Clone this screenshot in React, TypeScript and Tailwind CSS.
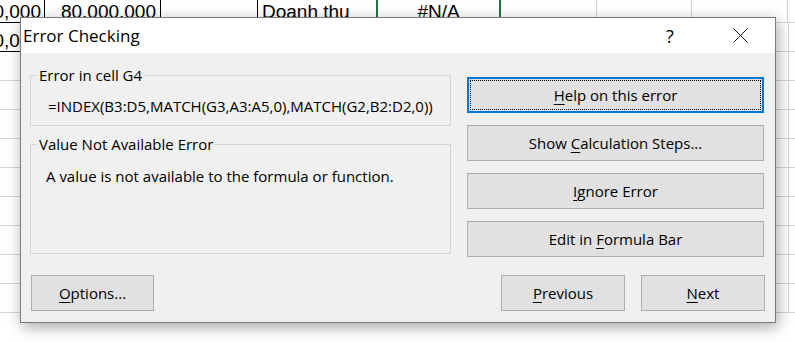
import React from "react";

const COLS = [45, 116, 97, 119, 125, 96, 95, 96, 20];
const ROWS = 11;

// cells with black table borders (row, col)
const DARK = new Set(["0-0", "0-1", "0-2", "0-3", "1-0", "1-1", "1-2", "1-3"]);

const ROW1: Record<number, { text: string; align: string }> = {
  0: { text: "80,000", align: "justify-end pr-[3px]" },
  1: { text: "80.000.000", align: "justify-end pr-[4px]" },
  3: { text: "Doanh thu", align: "justify-start pl-[4px]" },
  4: { text: "#N/A", align: "justify-center" },
};

function Sheet() {
  return (
    <div className="flex flex-col font-['Liberation_Sans',Arial,sans-serif] text-[19px] leading-[19px] text-black">
      {Array.from({ length: ROWS }).map((_, r) => (
        <div key={r} className={`flex ${r === 0 ? "h-[23px]" : "h-[29px]"}`}>
          {COLS.map((w, c) => {
            const dark = DARK.has(`${r}-${c}`);
            const sel = c === 4 && r === 0;
            const cell = r === 0 ? ROW1[c] : r === 1 && c === 0 ? ROW1[0] : undefined;
            return (
              <div
                key={c}
                style={{ width: w }}
                className={`flex shrink-0 overflow-hidden whitespace-nowrap border-b border-r ${
                  dark ? "border-black" : "border-[#d4d4d4]"
                } ${sel ? "border-l-2 border-r-2 border-l-[#217346] border-r-[#217346] -ml-[1px]" : ""} ${
                  cell ? cell.align : ""
                } ${r === 0 ? "pt-[2px]" : "pt-[8px]"}`}
              >
                {cell ? <span>{cell.text}</span> : null}
              </div>
            );
          })}
        </div>
      ))}
    </div>
  );
}

function Key({ k, rest, pre = "" }: { k: string; rest: string; pre?: string }) {
  return (
    <span>
      {pre}
      <span className="underline underline-offset-[3px] decoration-1">{k}</span>
      {rest}
    </span>
  );
}

function Btn({ children, focused = false, className = "" }: { children: React.ReactNode; focused?: boolean; className?: string }) {
  return (
    <div
      className={`flex h-[36px] items-center justify-center bg-[#e1e1e1] ${
        focused ? "border-2 border-[#0078d7] p-[1px]" : "border border-[#adadad]"
      } ${className}`}
    >
      {focused ? (
        <div className="flex h-full w-full items-center justify-center border border-dotted border-black">{children}</div>
      ) : (
        children
      )}
    </div>
  );
}

export default function App() {
  return (
    <div className="relative h-[342px] w-[795px] overflow-hidden bg-white">
      <Sheet />

      {/* Error Checking dialog */}
      <div className="absolute left-[20px] top-[17px] flex h-[306px] w-[756px] flex-col border border-[#7a7a7a] bg-[#f0f0f0] font-['Segoe_UI','Open_Sans',sans-serif] text-[15px] leading-[20px] text-black shadow-[2px_4px_14px_rgba(0,0,0,0.35)]">
        <div className="flex h-[35px] shrink-0 items-center bg-white pl-[2px]">
          <span className="text-[17px]">Error Checking</span>
          <div className="flex-1" />
          <div className="flex h-full w-[70px] items-center justify-center text-[18px]">?</div>
          <div className="flex h-full w-[70px] items-center justify-center">
            <svg width="15" height="15" viewBox="0 0 15 15" fill="none" stroke="#111" strokeWidth="1">
              <path d="M0.5 0.5 L14.5 14.5 M14.5 0.5 L0.5 14.5" />
            </svg>
          </div>
        </div>

        <div className="flex flex-1 flex-col pl-[9px] pr-[10px]">
          <div className="flex gap-[16px]">
            <div className="flex w-[421px] flex-col pt-[12px]">
              <fieldset className="h-[61px] border border-[#d5d5d5]">
                <legend className="ml-[6px] px-[2px]">Error in cell G4</legend>
                <div className="mt-[11px] pl-[17px] whitespace-nowrap">=INDEX(B3:D5,MATCH(G3,A3:A5,0),MATCH(G2,B2:D2,0))</div>
              </fieldset>
              <fieldset className="mt-[8px] h-[120px] border border-[#d5d5d5]">
                <legend className="ml-[6px] px-[2px]">Value Not Available Error</legend>
                <div className="mt-[12px] pl-[15px]">A value is not available to the formula or function.</div>
              </fieldset>
            </div>
            <div className="flex w-[297px] flex-col gap-[12px] pt-[24px]">
              <Btn focused>
                <Key k="H" rest="elp on this error" />
              </Btn>
              <Btn>
                <Key pre="Show " k="C" rest="alculation Steps..." />
              </Btn>
              <Btn>
                <Key k="I" rest="gnore Error" />
              </Btn>
              <Btn>
                <Key pre="Edit in " k="F" rest="ormula Bar" />
              </Btn>
            </div>
          </div>

          <div className="mb-[11px] mt-auto flex items-center">
            <Btn className="ml-[1px] w-[123px]">
              <Key k="O" rest="ptions..." />
            </Btn>
            <div className="flex-1" />
            <Btn className="w-[124px]">
              <Key k="P" rest="revious" />
            </Btn>
            <Btn className="ml-[16px] w-[124px]">
              <Key k="N" rest="ext" />
            </Btn>
          </div>
        </div>
      </div>
    </div>
  );
}
